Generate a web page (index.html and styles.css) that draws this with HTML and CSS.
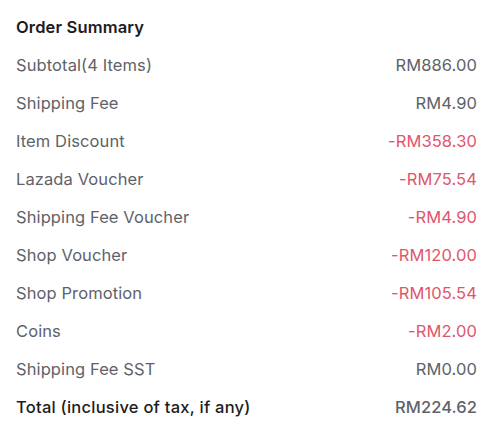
FILE: index.html
```html
<!DOCTYPE html>
<html lang="en">
<head>
  <meta charset="UTF-8">
  <title>Order Summary</title>
  <link rel="stylesheet" href="styles.css">
</head>
<body>
  <div class="summary">
    <h2 class="summary-title">Order Summary</h2>
    <div class="row"><span class="label">Subtotal(4 Items)</span><span class="value">RM886.00</span></div>
    <div class="row"><span class="label">Shipping Fee</span><span class="value">RM4.90</span></div>
    <div class="row"><span class="label">Item Discount</span><span class="value discount">-RM358.30</span></div>
    <div class="row"><span class="label">Lazada Voucher</span><span class="value discount">-RM75.54</span></div>
    <div class="row"><span class="label">Shipping Fee Voucher</span><span class="value discount">-RM4.90</span></div>
    <div class="row"><span class="label">Shop Voucher</span><span class="value discount">-RM120.00</span></div>
    <div class="row"><span class="label">Shop Promotion</span><span class="value discount">-RM105.54</span></div>
    <div class="row"><span class="label">Coins</span><span class="value discount">-RM2.00</span></div>
    <div class="row"><span class="label">Shipping Fee SST</span><span class="value">RM0.00</span></div>
    <div class="row total"><span class="label">Total (inclusive of tax, if any)</span><span class="value">RM224.62</span></div>
  </div>
</body>
</html>
```

FILE: styles.css
```css
* {
  box-sizing: border-box;
  margin: 0;
  padding: 0;
}

body {
  font-family: Inter, 'Noto Sans', sans-serif;
  background: #ffffff;
  width: 500px;
  height: 434px;
}

.summary {
  padding: 8px 23px 0 16px;
}

.summary-title {
  font-size: 16.5px;
  font-weight: 600;
  color: #1c1c1c;
  line-height: 38px;
  letter-spacing: 0.15px;
}

.row {
  display: flex;
  justify-content: space-between;
  align-items: center;
  height: 38px;
  font-size: 16.5px;
  color: #5e6269;
  letter-spacing: 0.1px;
}

.value.discount {
  color: #e0566b;
}

.total .label {
  color: #1c1c1c;
  font-weight: 500;
  letter-spacing: 0.25px;
}

.total .value {
  font-weight: 500;
}
```
